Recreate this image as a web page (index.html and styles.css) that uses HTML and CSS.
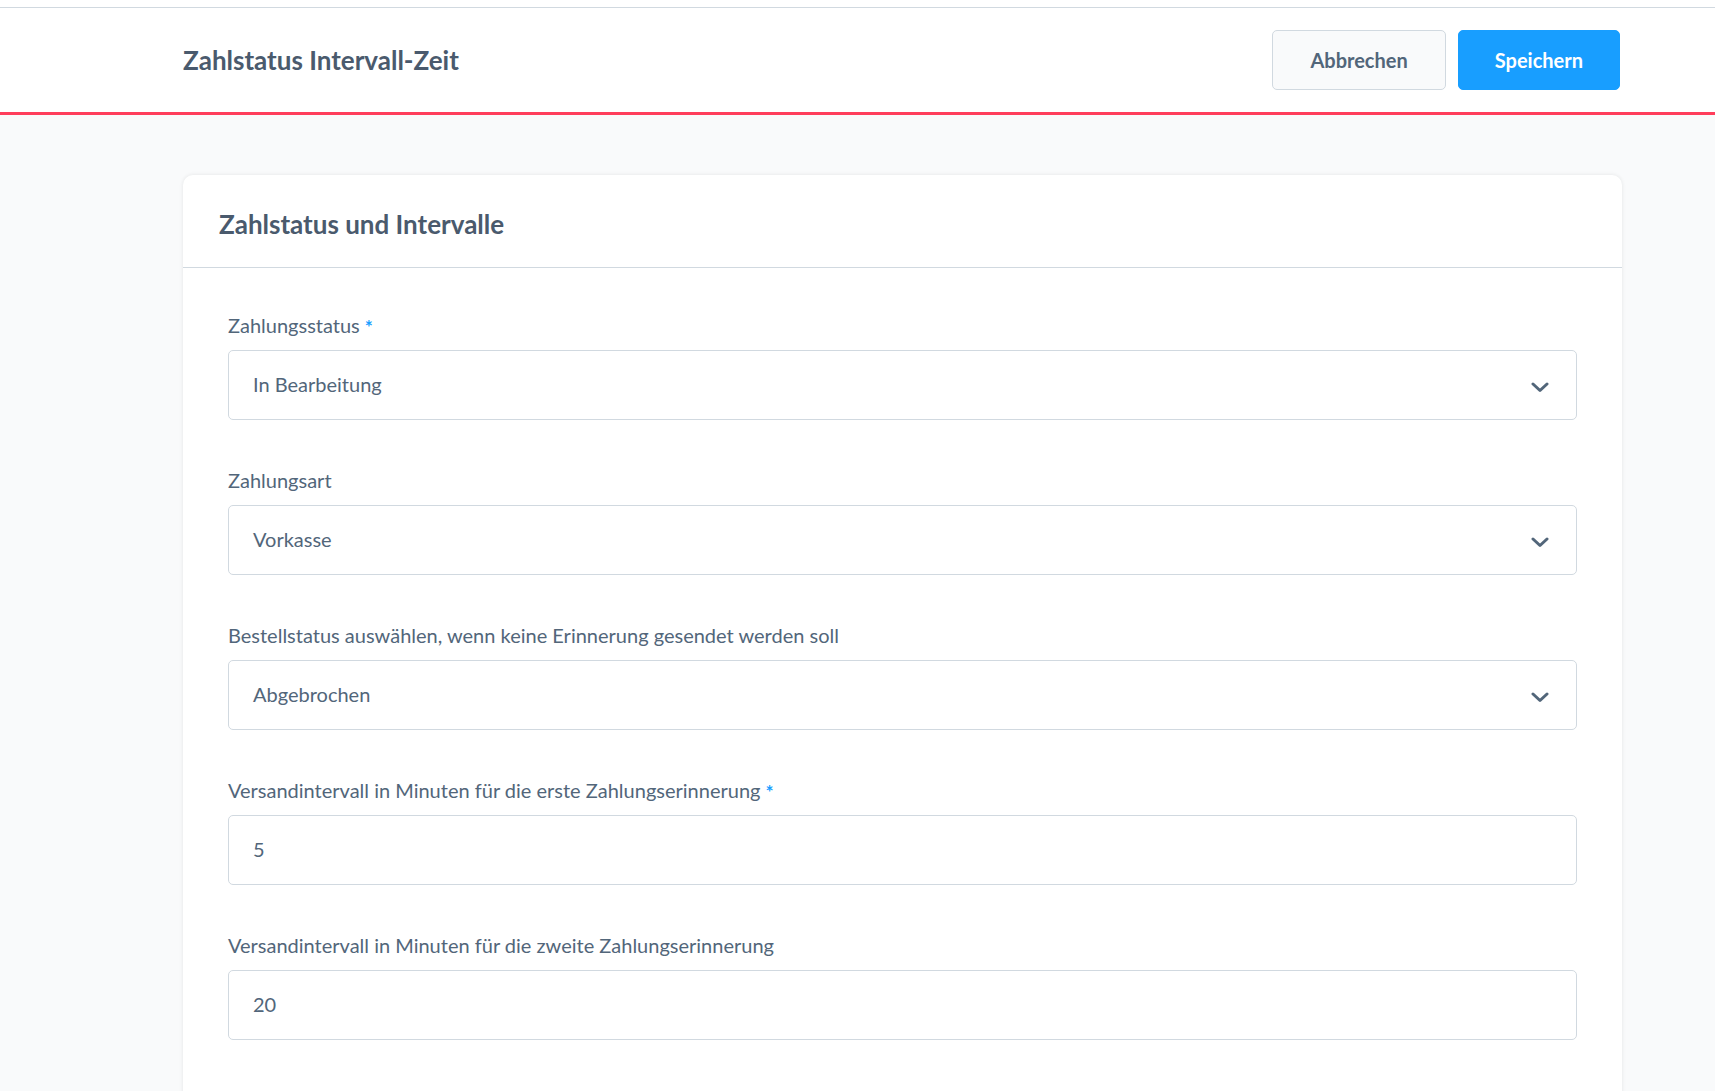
FILE: index.html
```html
<!DOCTYPE html>
<html lang="de">
<head>
<meta charset="utf-8">
<title>Zahlstatus Intervall-Zeit</title>
<link rel="stylesheet" href="styles.css">
</head>
<body>
<div class="page">
  <div class="top-gap"></div>
  <header class="smart-bar">
    <div class="smart-bar-inner">
      <h1 class="smart-bar-title">Zahlstatus Intervall-Zeit</h1>
      <div class="smart-bar-actions">
        <button class="btn btn-secondary" type="button">Abbrechen</button>
        <button class="btn btn-primary" type="button">Speichern</button>
      </div>
    </div>
  </header>
  <main class="content">
    <section class="card">
      <div class="card-header">
        <h2 class="card-title">Zahlstatus und Intervalle</h2>
      </div>
      <div class="card-body">
        <div class="field">
          <label class="field-label">Zahlungsstatus<span class="req">*</span></label>
          <div class="control select">
            <span class="control-value">In Bearbeitung</span>
            <svg class="chevron" width="18" height="11" viewBox="0 0 18 11"><polyline points="2,2 9,8.5 16,2" fill="none" stroke="#52667a" stroke-width="3" stroke-linecap="round" stroke-linejoin="round"/></svg>
          </div>
        </div>
        <div class="field">
          <label class="field-label">Zahlungsart</label>
          <div class="control select">
            <span class="control-value">Vorkasse</span>
            <svg class="chevron" width="18" height="11" viewBox="0 0 18 11"><polyline points="2,2 9,8.5 16,2" fill="none" stroke="#52667a" stroke-width="3" stroke-linecap="round" stroke-linejoin="round"/></svg>
          </div>
        </div>
        <div class="field">
          <label class="field-label">Bestellstatus auswählen, wenn keine Erinnerung gesendet werden soll</label>
          <div class="control select">
            <span class="control-value">Abgebrochen</span>
            <svg class="chevron" width="18" height="11" viewBox="0 0 18 11"><polyline points="2,2 9,8.5 16,2" fill="none" stroke="#52667a" stroke-width="3" stroke-linecap="round" stroke-linejoin="round"/></svg>
          </div>
        </div>
        <div class="field">
          <label class="field-label">Versandintervall in Minuten für die erste Zahlungserinnerung<span class="req">*</span></label>
          <div class="control">
            <span class="control-value">5</span>
          </div>
        </div>
        <div class="field">
          <label class="field-label">Versandintervall in Minuten für die zweite Zahlungserinnerung</label>
          <div class="control">
            <span class="control-value">20</span>
          </div>
        </div>
      </div>
    </section>
  </main>
</div>
</body>
</html>
```
FILE: styles.css
```css
* { box-sizing: border-box; }
html, body { margin: 0; padding: 0; }
body {
  font-family: Lato, "Open Sans", sans-serif;
  color: #52667a;
  background: #f9fafb;
}
.page {
  height: 100vh;
  overflow: hidden;
  display: flex;
  flex-direction: column;
}
.top-gap {
  height: 7px;
  background: #ffffff;
  flex: none;
}
.smart-bar {
  flex: none;
  background: #ffffff;
  border-top: 1px solid #d1d9e0;
  border-bottom: 3px solid #ff3d5b;
  height: 108px;
}
.smart-bar-inner {
  margin-left: 183px;
  width: 1437px;
  height: 104px;
  display: flex;
  align-items: center;
  justify-content: space-between;
}
.smart-bar-title {
  margin: 0;
  font-size: 26px;
  line-height: 32px;
  font-weight: 700;
  color: #4a5a6d;
}
.smart-bar-actions {
  display: flex;
  gap: 12px;
}
.btn {
  height: 60px;
  border-radius: 5px;
  font-family: Lato, "Open Sans", sans-serif;
  font-size: 20px;
  font-weight: 700;
  padding: 0 37px;
  border: 1px solid transparent;
  cursor: pointer;
}
.btn-secondary {
  background: #f9fafb;
  border-color: #d1d9e0;
  color: #52667a;
}
.btn-primary {
  background: #189eff;
  border-color: #189eff;
  color: #ffffff;
  padding: 0 36px;
}
.content {
  flex: 1;
  padding-top: 60px;
}
.card {
  margin-left: 183px;
  width: 1439px;
  background: #ffffff;
  border-radius: 10px;
  box-shadow: 0 0 4px rgba(0, 0, 0, 0.09);
}
.card-header {
  padding: 33px 36px 27px;
  border-bottom: 1px solid #d1d9e0;
}
.card-title {
  margin: 0;
  font-size: 26px;
  line-height: 32px;
  font-weight: 700;
  color: #4a5a6d;
}
.card-body {
  padding: 46px 45px 120px;
}
.field {
  margin-bottom: 49px;
}
.field-label {
  display: block;
  font-size: 20px;
  line-height: 22px;
  height: 22px;
  margin-bottom: 14px;
  color: #52667a;
}
.req {
  color: #189eff;
  font-size: 19px;
  font-weight: 700;
  line-height: 0;
  margin-left: 5px;
  vertical-align: -1px;
}
.control {
  height: 70px;
  border: 1px solid #d1d9e0;
  border-radius: 5px;
  background: #ffffff;
  display: flex;
  align-items: center;
  padding: 0 27px 2px 24px;
}
.control-value {
  flex: 1;
  font-size: 20px;
  color: #52667a;
}
.chevron {
  flex: none;
  margin-top: 6px;
}
```
